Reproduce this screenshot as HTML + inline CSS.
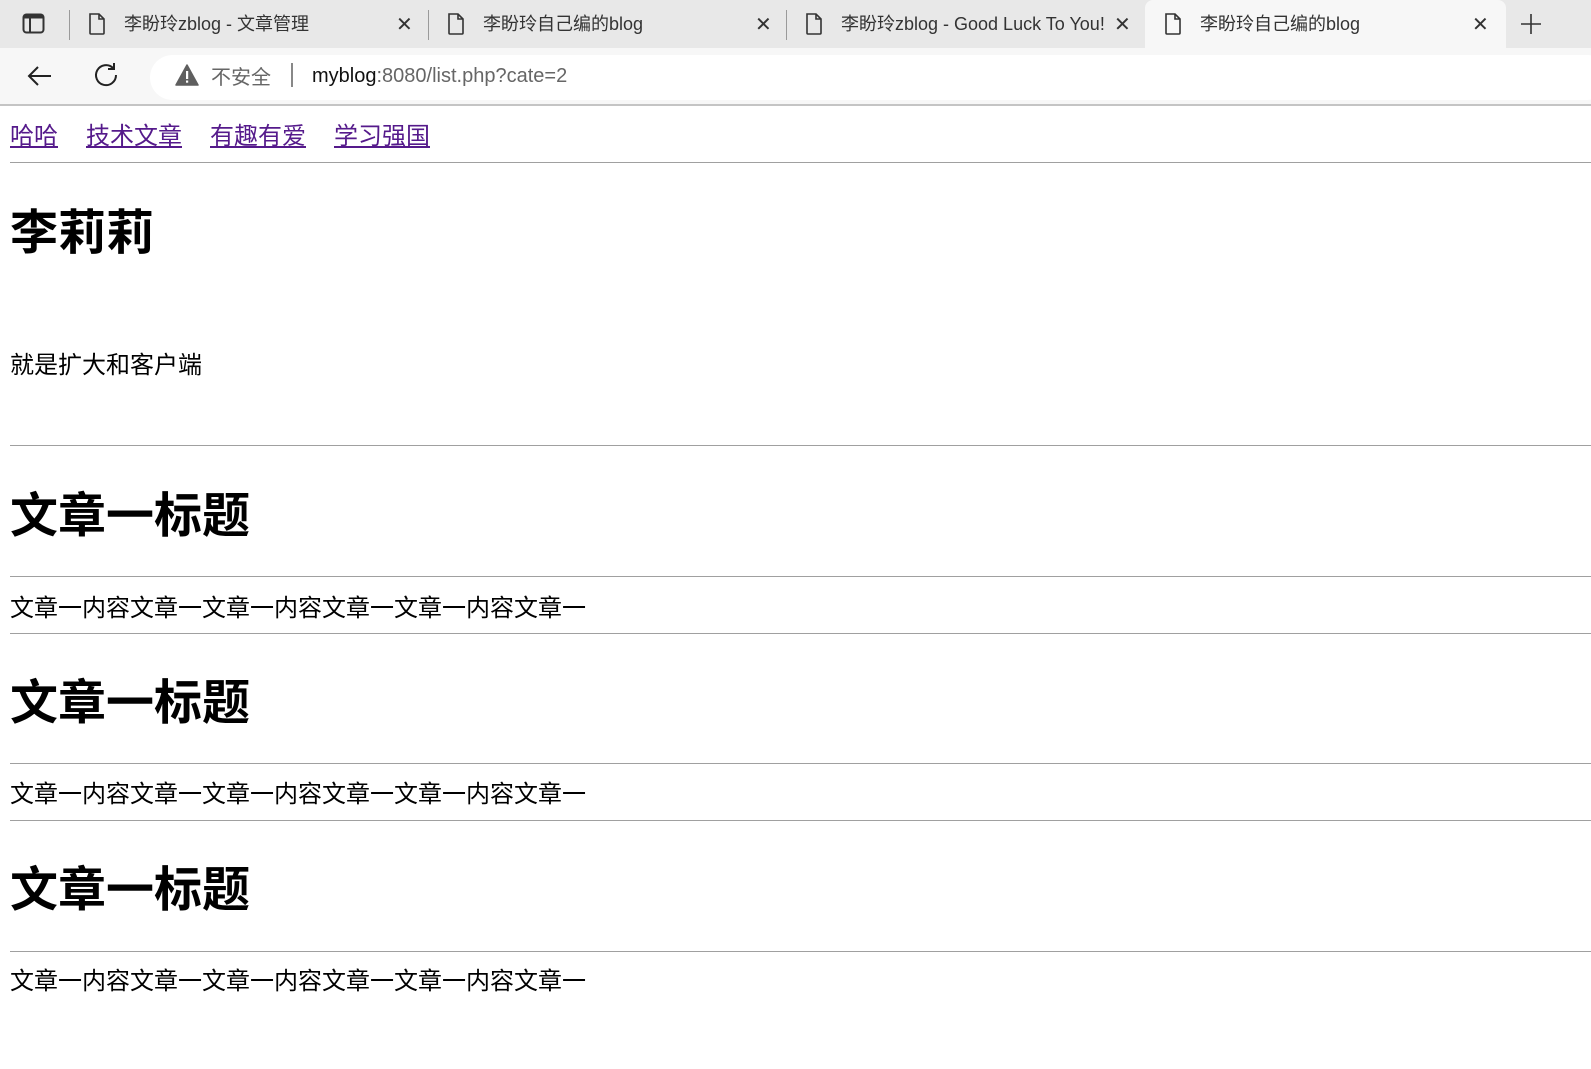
<!DOCTYPE html>
<html><head><meta charset="utf-8"><style>
*{margin:0;padding:0;box-sizing:border-box}
body{width:1591px;height:1069px;overflow:hidden;background:#fff;font-family:"Liberation Sans","Noto Sans CJK SC",sans-serif;position:relative}
.abs{position:absolute;white-space:nowrap}
.tabs{position:absolute;left:0;top:0;width:1591px;height:48px;background:#e8e8e8}
.tool{position:absolute;left:0;top:48px;width:1591px;height:58px;background:#f7f7f7;border-bottom:2px solid #c4c4c4}
.tt{font-size:18px;color:#333;top:10px}
.sep{position:absolute;top:10px;width:1px;height:30px;background:#9a9a9a}
.x{font-size:20px;color:#333;top:10px}
.hr{position:absolute;left:10px;right:0;height:1px;background:#a0a0a0}
.h1{font-weight:bold;color:#000;font-family:"Noto Sans CJK SC",sans-serif}
.p{font-size:24px;color:#000;font-family:"Noto Sans CJK SC",sans-serif}
a{color:#551a8b;text-decoration:underline}
</style></head><body>
<div class="tabs">
 <svg class="abs" style="left:22px;top:13px" width="24" height="22" viewBox="0 0 24 22"><rect x="1.5" y="1.5" width="20" height="18" rx="3" fill="none" stroke="#333" stroke-width="2"/><rect x="1.5" y="1.5" width="20" height="4" fill="#333"/><line x1="8" y1="5" x2="8" y2="19" stroke="#333" stroke-width="2"/></svg>
 <div class="sep" style="left:69px"></div>
 <svg class="abs" style="left:88px;top:12px" width="18" height="24" viewBox="0 0 18 24"><path d="M2 2h9l5 5v14a1 1 0 0 1-1 1H3a1 1 0 0 1-1-1z" fill="none" stroke="#333" stroke-width="1.6"/><path d="M11 2v5h5" fill="none" stroke="#333" stroke-width="1.6"/></svg>
 <div class="abs tt" style="left:124px">李盼玲zblog - 文章管理</div>
 <div class="abs x" style="left:396px;top:12px">✕</div>
 <div class="sep" style="left:428px"></div>
 <svg class="abs" style="left:447px;top:12px" width="18" height="24" viewBox="0 0 18 24"><path d="M2 2h9l5 5v14a1 1 0 0 1-1 1H3a1 1 0 0 1-1-1z" fill="none" stroke="#333" stroke-width="1.6"/><path d="M11 2v5h5" fill="none" stroke="#333" stroke-width="1.6"/></svg>
 <div class="abs tt" style="left:483px">李盼玲自己编的blog</div>
 <div class="abs x" style="left:755px;top:12px">✕</div>
 <div class="sep" style="left:786px"></div>
 <svg class="abs" style="left:805px;top:12px" width="18" height="24" viewBox="0 0 18 24"><path d="M2 2h9l5 5v14a1 1 0 0 1-1 1H3a1 1 0 0 1-1-1z" fill="none" stroke="#333" stroke-width="1.6"/><path d="M11 2v5h5" fill="none" stroke="#333" stroke-width="1.6"/></svg>
 <div class="abs tt" style="left:841px">李盼玲zblog - Good Luck To You!</div>
 <div class="abs x" style="left:1114px;top:12px">✕</div>
 <div class="abs" style="left:1145px;top:0;width:361px;height:48px;background:#f7f7f7;border-radius:8px 8px 0 0"></div>
 <svg class="abs" style="left:1164px;top:12px" width="18" height="24" viewBox="0 0 18 24"><path d="M2 2h9l5 5v14a1 1 0 0 1-1 1H3a1 1 0 0 1-1-1z" fill="none" stroke="#333" stroke-width="1.6"/><path d="M11 2v5h5" fill="none" stroke="#333" stroke-width="1.6"/></svg>
 <div class="abs tt" style="left:1200px">李盼玲自己编的blog</div>
 <div class="abs x" style="left:1472px;top:12px">✕</div>
 <svg class="abs" style="left:1519px;top:12px" width="24" height="24" viewBox="0 0 24 24"><path d="M12 2v20M2 12h20" stroke="#333" stroke-width="1.6"/></svg>
</div>
<div class="tool">
 <svg class="abs" style="left:26px;top:16px" width="28" height="24" viewBox="0 0 28 24"><path d="M25 12H3M12 3l-9 9 9 9" fill="none" stroke="#222" stroke-width="2"/></svg>
 <svg class="abs" style="left:92px;top:14px" width="28" height="28" viewBox="0 0 28 28"><path d="M21 6A10 10 0 1 0 24 13" fill="none" stroke="#222" stroke-width="2"/><path d="M16 6h6V0" fill="none" stroke="#222" stroke-width="2" transform="translate(0,1)"/></svg>
 <div class="abs" style="left:150px;top:7px;width:1460px;height:45px;background:#fff;border-radius:23px"></div>
 <svg class="abs" style="left:175px;top:16px" width="24" height="22" viewBox="0 0 24 22"><path d="M12 1L23 21H1z" fill="#5f5f5f" stroke="#5f5f5f" stroke-linejoin="round" stroke-width="1.5"/><rect x="11" y="7" width="2.2" height="8" fill="#fff"/><rect x="11" y="16.5" width="2.2" height="2.2" fill="#fff"/></svg>
 <div class="abs" style="left:211px;top:13px;font-size:20px;color:#666">不安全</div>
 <div class="abs" style="left:291px;top:15px;width:2px;height:24px;background:#888"></div>
 <div class="abs" style="left:312px;top:17px;font-size:20px;color:#666"><span style="color:#111">myblog</span>:8080/list.php?cate=2</div>
</div>

<div class="abs" style="left:10px;top:118px;font-size:24px;font-family:'Noto Sans CJK SC',sans-serif;line-height:32px">
<a>哈哈</a><span style="display:inline-block;width:28px"></span><a>技术文章</a><span style="display:inline-block;width:28px"></span><a>有趣有爱</a><span style="display:inline-block;width:28px"></span><a>学习强国</a>
</div>
<div class="hr" style="top:162px"></div>
<div class="abs h1" style="left:10px;top:197px;font-size:48px;line-height:62px">李莉莉</div>
<div class="abs p" style="left:10px;top:347px;line-height:32px">就是扩大和客户端</div>
<div class="hr" style="top:445px"></div>
<div class="abs h1" style="left:10px;top:480px;font-size:48px;line-height:62px">文章一标题</div>
<div class="hr" style="top:576px"></div>
<div class="abs p" style="left:10px;top:590px;line-height:32px">文章一内容文章一文章一内容文章一文章一内容文章一</div>
<div class="hr" style="top:633px"></div>
<div class="abs h1" style="left:10px;top:667px;font-size:48px;line-height:62px">文章一标题</div>
<div class="hr" style="top:763px"></div>
<div class="abs p" style="left:10px;top:776px;line-height:32px">文章一内容文章一文章一内容文章一文章一内容文章一</div>
<div class="hr" style="top:820px"></div>
<div class="abs h1" style="left:10px;top:854px;font-size:48px;line-height:62px">文章一标题</div>
<div class="hr" style="top:951px"></div>
<div class="abs p" style="left:10px;top:963px;line-height:32px">文章一内容文章一文章一内容文章一文章一内容文章一</div>
</body></html>
